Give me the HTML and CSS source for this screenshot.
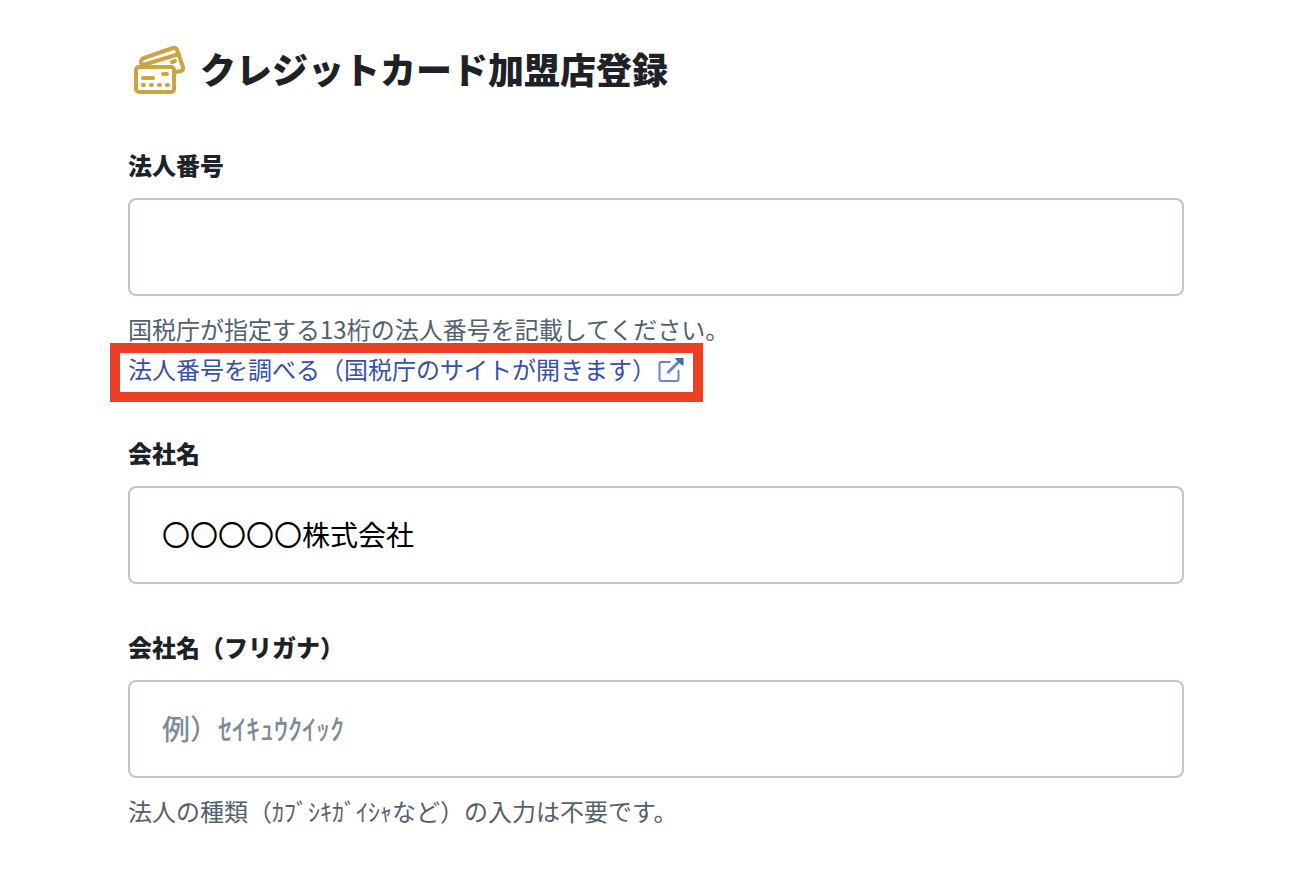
FILE: index.html
```html
<!DOCTYPE html>
<html lang="ja">
<head>
    <meta charset="UTF-8">
    <title>クレジットカード加盟店登録</title>
    <meta name="viewport" content="width=device-width, initial-scale=1.0">
    <link rel="stylesheet" href="styles.css">
</head>
<body>
    <main class="container">
        <h1>
            <svg class="card-icon" viewBox="0 0 60 54" fill="none" stroke="#cba542" stroke-width="4" stroke-linecap="round" stroke-linejoin="round" aria-hidden="true">
                <path d="M14 25L13 21Q13 18 16 17L45 7Q48 6 49 9L55 26Q56 29 53 30L48 31"/>
                <path d="M15 24L51 13"/>
                <path d="M44 21L47 20"/>
                <rect x="8" y="26" width="38" height="25" rx="3"/>
                <path d="M35 33H39M15 37H25M15 44H16M23 44H24M31 44H32M39 44H40"/>
            </svg>
            クレジットカード加盟店登録
        </h1>
        <form>
            <div class="field">
                <label for="houjinBangou">法人番号</label>
                <input type="text" id="houjinBangou">
                <div class="help">
                    国税庁が指定する13桁の法人番号を記載してください。<br>
                    <a class="search-link" href="#">法人番号を調べる（国税庁のサイトが開きます）<svg class="link-icon" viewBox="0 0 28 28" fill="none" stroke="#6c83c8" stroke-width="2" stroke-linejoin="round" aria-hidden="true">
                            <path d="M14 7H5Q3 7 3 9V24Q3 26 5 26H20Q22 26 22 24V15"/>
                            <path d="M11 18L24 5" stroke-width="3"/>
                            <path d="M18 3H27V11L24 9L21 6Z" fill="#4a64b5" stroke="none"/>
                        </svg></a>
                </div>
            </div>
            <div class="field">
                <label for="kaishaMei">会社名</label>
                <input type="text" id="kaishaMei" value="〇〇〇〇〇株式会社">
            </div>
            <div class="field">
                <label for="kaishaKana">会社名（フリガナ）</label>
                <input type="text" id="kaishaKana" placeholder="例）ｾｲｷｭｳｸｲｯｸ">
                <div class="help">法人の種類（ｶﾌﾞｼｷｶﾞｲｼｬなど）の入力は不要です。</div>
            </div>
        </form>
    </main>
</body>
</html>
```
FILE: styles.css
```css
* { box-sizing: border-box; }
body {
    margin: 0;
    background: #fff;
    color: #1c2228;
    font-family: "Noto Sans CJK JP", sans-serif;
}
.container { padding: 41px 124px 0 128px; }
h1 {
    display: flex;
    align-items: center;
    gap: 12px;
    margin: 0 0 53px;
    font-size: 36px;
    font-weight: 900;
    line-height: 54px;
}
.card-icon { width: 60px; height: 54px; }
.field { margin-bottom: 46px; }
.field:last-child { margin-bottom: 0; }
.field label {
    display: block;
    margin-bottom: 16px;
    font-size: 24px;
    font-weight: 900;
    line-height: 34px;
}
.field input {
    display: block;
    width: 100%;
    height: 98px;
    padding: 0 32px 2px;
    border: 2px solid #bec4d3;
    border-radius: 8px;
    background: #fff;
    color: #000;
    font-family: inherit;
    font-size: 28px;
}
.field input::placeholder { color: #7d8b99; font-weight: 500; opacity: 1; }
.help {
    padding: 13px 0 1px;
    color: #526070;
    font-size: 24px;
    line-height: 40px;
}
.search-link {
    position: relative;
    display: inline-flex;
    align-items: center;
    color: #3451a8;
    text-decoration: none;
}
/* 強調用の赤枠 */
.search-link::after {
    content: "";
    position: absolute;
    inset: -6px -18px -13px;
    border: 10px solid #eb4025;
    pointer-events: none;
}
.link-icon { width: 29px; height: 28px; }
```
